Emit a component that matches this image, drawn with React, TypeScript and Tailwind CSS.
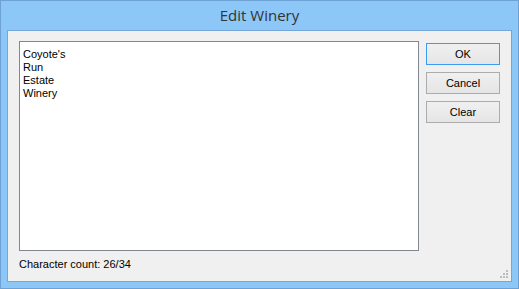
import React from "react";

function Grip() {
  const dots: [number, number][] = [
    [6, 0],
    [3, 3],
    [6, 3],
    [0, 6],
    [3, 6],
    [6, 6],
  ];
  return (
    <svg width="8" height="8" className="absolute right-[3px] bottom-[3px]">
      {dots.map(([x, y], i) => (
        <rect key={i} x={x} y={y} width="2" height="2" fill="#bcbcbc" />
      ))}
    </svg>
  );
}

function Btn({ label, def }: { label: string; def?: boolean }) {
  return (
    <div
      className={`w-[74px] h-[22px] flex items-center justify-center text-[11px] text-black border bg-gradient-to-b from-[#f0f0f0] to-[#e5e5e5] ${
        def ? "border-[#3c9bf0]" : "border-[#acacac]"
      }`}
    >
      {label}
    </div>
  );
}

export default function App() {
  return (
    <div
      className="w-[519px] h-[289px] bg-[#8cc7f8] border border-[#6fa2d4] flex flex-col"
      style={{ fontFamily: '"Liberation Sans", Arial, sans-serif' }}
    >
      <div
        className="h-[29px] flex items-center justify-center text-[15px] text-[#333333] pb-[1px]"
        style={{ fontFamily: '"Open Sans", "Noto Sans", sans-serif' }}
      >
        Edit Winery
      </div>
      <div className="mx-[6px] mb-[6px] flex-1 border border-[#76a6d6] bg-[#f0f0f0] relative flex flex-col pl-[11px] pt-[10px]">
        <div className="flex gap-[7px]">
          <div className="w-[400px] h-[210px] bg-white border border-[#828790] pl-[3px] pt-[6px] text-[11px] leading-[13px] text-black">
            <div>Coyote's</div>
            <div>Run</div>
            <div>Estate</div>
            <div>Winery</div>
          </div>
          <div className="flex flex-col gap-[7px] mt-[2px]">
            <Btn label="OK" def />
            <Btn label="Cancel" />
            <Btn label="Clear" />
          </div>
        </div>
        <div className="mt-[7px] text-[11px] leading-[13px] text-black">
          Character count: 26/34
        </div>
        <Grip />
      </div>
    </div>
  );
}
